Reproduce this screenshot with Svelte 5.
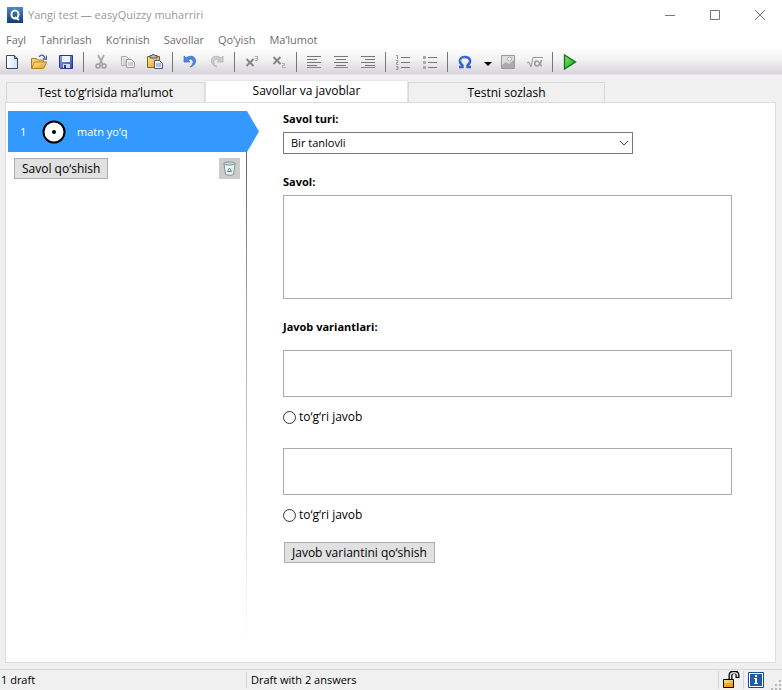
<script>
  const menus = ['Fayl', 'Tahrirlash', 'Ko‘rinish', 'Savollar', 'Qo‘yish', 'Ma’lumot'];
  const tools = [
    ['new', 'open', 'save'],
    ['cut', 'copy', 'paste'],
    ['undo', 'redo'],
    ['sup', 'sub'],
    ['left', 'center', 'right'],
    ['numbers', 'bullets'],
    ['omega', 'arrow', 'image', 'formula'],
    ['play']
  ];
  const tabs = ['Test to‘g‘risida ma’lumot', 'Savollar va javoblar', 'Testni sozlash'];
  let active = $state(1);
  let correct = $state(null);
  let answers = $state(['', '']);
</script>

{#snippet icon(name)}
  {#if name === 'arrow'}
    <svg width="8" height="16" viewBox="0 0 8 16"><path d="M0 8h8L4 12z" fill="#000" /></svg>
  {:else}
    <svg width="16" height="16" viewBox="0 0 16 16" fill="none">
      {#if name === 'new'}
        <path d="M2.5 1.5h8l3 3v10h-11z" fill="url(#paper)" stroke="#3d4a63" />
        <path d="M10.5 1.5v3h3" fill="#8fa9cc" stroke="#3d4a63" />
      {:else if name === 'open'}
        <path d="M.5 14V4.500h5l1 1.500h6v3" fill="#f6d070" stroke="#b07a18" />
        <path d="M.5 14.500l3-6.500h12.500l-3.500 6.500z" fill="url(#gold)" stroke="#b9801d" />
        <path d="M8 3c2-3 5-2 6 1M15.500 1.500V5H12" stroke="#49699c" stroke-width="1.300" />
      {:else if name === 'save'}
        <path d="M1.500 1.500h13v13h-12l-1-1z" fill="url(#disk)" stroke="#28388d" />
        <path d="M4 2h8v6H4z" fill="#eef3ff" /><path d="M5 10h7v4H5z" fill="#d8dcea" />
        <path d="M6 11h2v3H6z" fill="#28388d" />
      {:else if name === 'cut'}
        <path d="M5 1l4.500 9M11 1L6.500 10" stroke="#aaa" stroke-width="1.800" />
        <circle cx="5" cy="12" r="2" stroke="#999" stroke-width="1.500" />
        <circle cx="11" cy="12" r="2" stroke="#999" stroke-width="1.500" />
      {:else if name === 'copy'}
        <path d="M1.500 2.500h5l3 3v6h-8z" fill="#eee" stroke="#aaa" />
        <path d="M3 6h5M3 8h5M3 10h5" stroke="#bbb" />
        <path d="M6.500 5.500h5l3 3v5h-8z" fill="#f4f4f4" stroke="#a0a0a0" />
        <path d="M8 9h5M8 11h5" stroke="#aaa" />
      {:else if name === 'paste'}
        <path d="M.5 2.500h12v11H.5z" fill="url(#gold)" stroke="#856319" />
        <path d="M3 4V1.500h2L6 0l2 1.500h2V4z" fill="#bbb" stroke="#555" />
        <path d="M7.500 6.500h5l3 3v5h-8z" fill="#edf3fb" stroke="#4b5976" />
        <path d="M9 10h5M9 12h5" stroke="#7d8da8" />
      {:else if name === 'undo' || name === 'redo'}
        <g transform={name === 'redo' ? 'translate(16 0) scale(-1 1)' : undefined}>
          <path d="M2 2v6h6L6 6c3-2 6 0 5 3-.4 2-2 3-3 4 4-1 6-4 5.500-7C13 2 8 1 4 4z"
            fill={name === 'undo' ? '#4c87e6' : '#ccc'} stroke={name === 'undo' ? '#3567c1' : '#aaa'} stroke-width=".7" />
        </g>
      {:else if name === 'sup' || name === 'sub'}
        <path d={name === 'sup' ? 'M2.500 5l7 7M9.500 5l-7 7' : 'M2.500 3l7 7M9.500 3l-7 7'} stroke="#858585" stroke-width="2" />
        <path d={name === 'sup' ? 'M11 2.500h2.500v2H11.500M11 6.500h2.500v-2' : 'M11 9.500h2.500v2h-2v2h3'} stroke="#aaa" />
      {:else if name === 'left'}
        <path d="M1 2.500h14M1 5.500h10M1 8.500h14M1 11.500h10" stroke="#777" /><path d="M1 13.500h14" stroke="#888" />
      {:else if name === 'center'}
        <path d="M1 2.500h14M3 5.500h10M1 8.500h14M3 11.500h10" stroke="#777" /><path d="M1 13.500h14" stroke="#888" />
      {:else if name === 'right'}
        <path d="M1 2.500h14M5 5.500h10M1 8.500h14M5 11.500h10" stroke="#777" /><path d="M1 13.500h14" stroke="#888" />
      {:else if name === 'numbers' || name === 'bullets'}
        <path d="M6 3.500h9M6 8.500h9M6 13.500h9" stroke="#777" />
        {#if name === 'numbers'}
          <path d="M1 1.500h1.500V5M1 6.500h2v2H1.500v2H3.500M1 12.500h2v3H1M1.500 14h1.500" stroke="#999" />
        {:else}
          <path d="M1 3.500h3M1 8.500h3M1 13.500h3" stroke="#aaa" stroke-width="3" />
        {/if}
      {:else if name === 'omega'}
        <path d="M2 13h3.500v-1.500C1 8 2.500 3 8 3s7 5 2.500 8.500V13H14" stroke="#3565c9" stroke-width="2.400" />
        <path d="M3.500 7C4 4.500 6 4 8 4" stroke="#86aef4" />
      {:else if name === 'image'}
        <path d="M1.500 1.500h13v13h-13z" fill="#ddd" stroke="#999" />
        <path d="M2 14V11l4-3 3 2 5-4v8z" fill="#aaa" />
        <circle cx="9.500" cy="5" r="2" fill="#f6f6f6" stroke="#aaa" />
      {:else if name === 'formula'}
        <path d="M0 9l2-1 2 5 2-9.500h10" stroke="#999" />
        <path d="M14.500 6c-1 4-2 6-4.500 6-3 0-3-5 0-5 2.500 0 3 5 5 5" stroke="#999" stroke-width="1.500" />
      {:else if name === 'play'}
        <path d="M2.500 1v14L13.500 8z" fill="url(#green)" stroke="#0c7414" stroke-width="1.300" />
      {/if}
    </svg>
  {/if}
{/snippet}

<div class="window">
  <svg class="defs" width="0" height="0" aria-hidden="true">
    <defs>
      <linearGradient id="paper"><stop stop-color="#fff" /><stop offset="1" stop-color="#cfe2f8" /></linearGradient>
      <linearGradient id="gold" x2="1" y2="1"><stop stop-color="#ffe991" /><stop offset="1" stop-color="#e39b22" /></linearGradient>
      <linearGradient id="disk" x2="1" y2="1"><stop stop-color="#8aa5ee" /><stop offset="1" stop-color="#3348af" /></linearGradient>
      <linearGradient id="green" x2="1" y2="1"><stop stop-color="#8bea6a" /><stop offset="1" stop-color="#0a9b18" /></linearGradient>
      <linearGradient id="blue" x2="0" y2="1"><stop stop-color="#4b8cc8" /><stop offset="1" stop-color="#123c6e" /></linearGradient>
    </defs>
  </svg>

  <header class="title">
    <svg width="16" height="16" viewBox="0 0 16 16">
      <path d="M0 0h16v16H0z" fill="url(#blue)" />
      <ellipse cx="8" cy="7.500" rx="3.500" ry="4" fill="none" stroke="#fff" stroke-width="2" />
      <path d="M8 10l4 3" stroke="#fff" stroke-width="2" />
    </svg>
    <h1>Yangi test — easyQuizzy muharriri</h1>
    <div class="controls">
      <button aria-label="Minimize"><svg width="10" height="10"><path d="M0 5.500h10" /></svg></button>
      <button aria-label="Maximize"><svg width="10" height="10"><path d="M.5.5h9v9h-9z" /></svg></button>
      <button aria-label="Close"><svg width="10" height="10"><path d="M0 0l10 10M10 0L0 10" /></svg></button>
    </div>
  </header>

  <nav class="menu">
    {#each menus as menu}<button>{menu}</button>{/each}
  </nav>

  <div class="toolbar" role="toolbar" aria-label="Tools">
    {#each tools as group}
      <div class="group">
        {#each group as name}
          <button class:narrow={name === 'arrow'} aria-label={name}>{@render icon(name)}</button>
        {/each}
      </div>
    {/each}
  </div>

  <div class="tabs" role="tablist">
    {#each tabs as tab, i}
      <button role="tab" aria-selected={active === i} class:active={active === i} onclick={() => (active = i)}>{tab}</button>
    {/each}
  </div>

  <main>
    <aside>
      <button class="question">
        <span class="number">1</span>
        <svg width="24" height="24" viewBox="0 0 24 24">
          <circle cx="12" cy="12" r="10.500" fill="#fff" stroke="#000" stroke-width="2" />
          <circle cx="12" cy="12" r="2" />
        </svg>
        <span>matn yo‘q</span>
      </button>
      <div class="actions">
        <button class="push">Savol qo‘shish</button>
        <button class="push trash" aria-label="Delete">
          <svg width="15" height="15" viewBox="0 0 15 15" fill="#eaf2f1" stroke="#7d9695">
            <path d="M2 3l1.500 10.500c2 1 6 1 8 0L13 3z" />
            <ellipse cx="7.500" cy="2.500" rx="5.700" ry="1.500" fill="#cbdad9" />
            <path d="M5.500 10.500l2-3.500 2 3.500z" fill="none" stroke="#4d8b7d" />
          </svg>
        </button>
      </div>
    </aside>

    <form onsubmit={(e) => e.preventDefault()}>
      <label class="caption" for="type">Savol turi:</label>
      <div class="select">
        <select id="type"><option>Bir tanlovli</option></select>
        <svg width="10" height="6" viewBox="0 0 10 6"><path d="M1 1l4 4 4-4" fill="none" stroke="#444" /></svg>
      </div>
      <label class="caption" for="question">Savol:</label>
      <textarea id="question" class="large"></textarea>
      <h2 class="caption">Javob variantlari:</h2>
      {#each answers as _, i}
        <div class="answer">
          <textarea aria-label="Javob {i + 1}" bind:value={answers[i]}></textarea>
          <label class="radio"><input type="radio" name="correct" value={i} bind:group={correct} />to‘g‘ri javob</label>
        </div>
      {/each}
      <button type="button" class="push add">Javob variantini qo‘shish</button>
    </form>
  </main>

  <footer>
    <span class="drafts">1 draft</span>
    <span class="state">Draft with 2 answers</span>
    <span class="cell">
      <svg width="18" height="18" viewBox="0 0 18 18">
        <path d="M8.500 9V4c0-4 7-4 7 0v3" fill="none" stroke="#000" stroke-width="4" />
        <path d="M8.500 9V4c0-3 7-3 7 0v2" fill="none" stroke="#ddd" stroke-width="1.500" />
        <path d="M1.500 8.500h10v8h-10z" fill="url(#gold)" stroke="#000" />
        <path d="M2 12h9v4H2z" fill="#f28c16" opacity=".6" />
      </svg>
    </span>
    <span class="cell">
      <svg width="16" height="16" viewBox="0 0 16 16">
        <path d="M.5.5h15v15H.5z" fill="#fff" stroke="#174b94" /><path d="M2 2h12v12H2z" fill="#1c5cab" />
        <path d="M7 3h2v2H7zM6 6h3v5h1v1H6v-1h1V7H6z" fill="#fff" />
      </svg>
    </span>
    <svg class="grip" width="10" height="10" fill="#b8b8b8"><path d="M8 0h2v2H8zM4 4h2v2H4zM8 4h2v2H8zM0 8h2v2H0zM4 8h2v2H4zM8 8h2v2H8z" /></svg>
  </footer>
</div>

<style>
  :global(body) { margin: 0; }
  .window {
    display: flex;
    flex-direction: column;
    min-height: 100vh;
    background: #f0f0f0;
    color: #000;
    font: 12px/16px 'Open Sans', 'Noto Sans', sans-serif;
  }
  .window * { box-sizing: border-box; }
  .defs { position: absolute; }
  button { padding: 0; border: 0; background: none; font: inherit; color: inherit; }
  svg { flex: none; display: block; }
  .title, .menu, footer { font-size: 11px; }
  .title { display: flex; align-items: center; height: 29px; padding-left: 7px; background: #fff; color: #999; }
  h1 { flex: 1; margin: 0 0 0 5px; font: inherit; }
  .controls { display: flex; }
  .controls button { display: grid; place-items: center; width: 45px; height: 29px; }
  .controls path { fill: none; stroke: #777; }
  .menu { display: flex; gap: 14px; height: 20px; padding: 0 6px; background: #fff; color: #6d6d6d; }
  .menu button { height: 22px; }
  .toolbar {
    display: flex;
    height: 30px;
    padding-bottom: 4px;
    background: linear-gradient(#fdfdfd, #f3f2f4 10px, #d8d4dc 25px, #f3eff5 26px, #f0f0f0);
  }
  .group { display: flex; }
  .group:first-child { margin-left: -2px; }
  .group:not(:first-child)::before { content: ''; width: 1px; height: 20px; margin: 3px 3px 3px 4px; background: #777; }
  .group button { display: grid; place-items: center; width: 27px; height: 26px; }
  .group .narrow { width: 16px; padding-left: 4px; }
  .tabs { display: flex; align-items: flex-end; height: 24px; padding: 0 6px; }
  .tabs button { flex: 0 1 199px; height: 21px; border: 1px solid #d9d9d9; border-bottom: 0; }
  .tabs .active { flex-basis: 203px; height: 23px; padding-bottom: 3px; background: #fff; border-color: #e5e5e5; }
  .tabs button:last-child { flex-basis: 197px; }
  main {
    flex: 1;
    display: flex;
    gap: 36px;
    margin: -1px 6px 6px 5px;
    padding: 8px 43px 20px 2px;
    background: #fff;
    border: 1px solid #dcdcdc;
  }
  aside {
    flex: 0 0 239px;
    background: linear-gradient(#555, #aaa 40%, #fff) right / 1px 100% no-repeat;
  }
  .question {
    display: flex;
    align-items: center;
    width: calc(100% + 12px);
    height: 41px;
    padding-left: 12px;
    background: #3399ff;
    color: #fff;
    font-size: 11px;
    clip-path: polygon(0 0, calc(100% - 12px) 0, 100% 50%, calc(100% - 12px) 100%, 0 100%);
  }
  .number { width: 22px; text-align: left; }
  .question svg { margin-right: 11px; }
  .actions { display: flex; justify-content: space-between; padding: 6px 7px 0 6px; }
  .push { height: 21px; padding: 0 7px; border: 1px solid #adadad; background: #e1e1e1; white-space: nowrap; }
  .trash { display: grid; place-items: center; width: 21px; padding: 0; border-color: #ccc; background: #ccc; }
  form { flex: 1; min-width: 0; display: flex; flex-direction: column; align-items: stretch; }
  .caption { margin: 0 0 5px; font: bold 11px/16px 'Open Sans', 'Noto Sans', sans-serif; }
  .select { position: relative; width: 78%; margin-bottom: 20px; }
  select {
    appearance: none;
    display: block;
    width: 100%;
    height: 22px;
    padding: 0 20px 0 7px;
    border: 1px solid #777;
    border-radius: 0;
    background: #fff;
    color: #000;
    font: inherit;
    font-size: 11px;
  }
  .select svg { position: absolute; right: 4px; top: 8px; pointer-events: none; }
  textarea { display: block; width: 100%; height: 47px; border: 1px solid #aaa; border-radius: 0; background: #fff; resize: none; font: inherit; }
  .large { height: 104px; margin-bottom: 20px; }
  h2.caption { margin-bottom: 15px; }
  .answer { margin-bottom: 23px; }
  .radio { display: flex; align-items: center; width: max-content; gap: 3px; margin-top: 12px; }
  .radio input { appearance: none; width: 13px; height: 13px; margin: 0; border: 1px solid #333; border-radius: 50%; background: #fff; }
  .radio input:checked { background: radial-gradient(#333 0 3px, #fff 4px); }
  .add { align-self: flex-start; margin: -4px 0 0 1px; }
  footer { display: flex; align-items: center; height: 21px; border-top: 1px solid #d7d7d7; }
  .drafts { width: 246px; padding-left: 1px; }
  .state { flex: 1; padding-left: 4px; border-left: 1px solid #d7d7d7; }
  .cell { display: grid; place-items: center; width: 25px; height: 18px; border-left: 1px solid #d7d7d7; }
  .grip { align-self: flex-end; margin-left: 3px; margin-right: 1px; }
</style>
